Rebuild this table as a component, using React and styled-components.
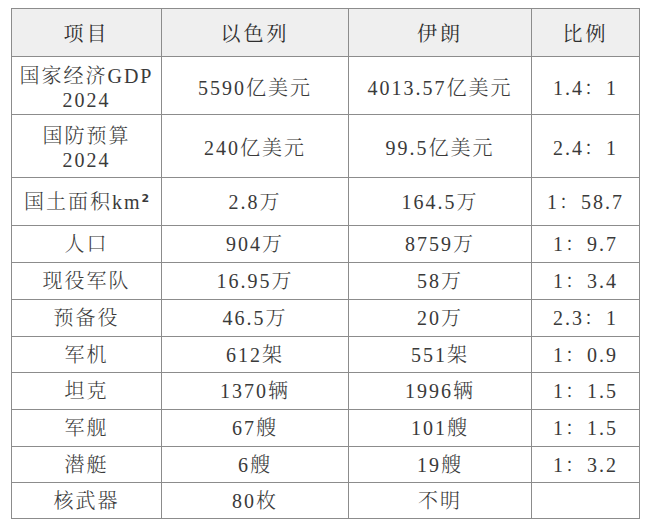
import React from "react";
import styled, { createGlobalStyle } from "styled-components";

const GlobalStyle = createGlobalStyle`
  html, body {
    margin: 0;
    padding: 0;
    background: #ffffff;
  }
  body {
    font-family: "Liberation Serif", "Noto Serif CJK SC", "Noto Sans CJK SC", serif;
    color: #3a3a3a;
  }
`;

const Page = styled.main`
  width: 650px;
  height: 531px;
  padding: 8px 0 0 11px;
  box-sizing: border-box;
  background: #ffffff;
`;

const Table = styled.table`
  width: 628px;
  border-collapse: collapse;
  table-layout: fixed;
  font-size: 20px;
  letter-spacing: 2px;
`;

const HeadCell = styled.th`
  height: 47px;
  padding: 0;
  border: 1px solid #8c8c8c;
  background: #efefef;
  font-weight: 400;
  color: #2e2e2e;
  letter-spacing: 3px;
  text-align: center;
  vertical-align: middle;
`;

const Cell = styled.td`
  height: ${(props) => (props.$tall ? props.$h - 4 : props.$h)}px;
  padding: ${(props) => (props.$tall ? "4px 0 0" : "0")};
  border: 1px solid #8c8c8c;
  text-align: center;
  vertical-align: middle;
  line-height: 24px;
  font-weight: 300;
  color: #3a3a3a;
  white-space: nowrap;
`;

const Sup = styled.sup`
  font-family: "DejaVu Sans", sans-serif;
  font-weight: 700;
  font-size: 11px;
  letter-spacing: 0;
  vertical-align: 7px;
  line-height: 0;
`;

const columns = [150, 187, 183, 108];

const rows = [
  { h: 57, item: ["国家经济GDP", "2024"], il: "5590亿美元", ir: "4013.57亿美元", ratio: "1.4：1" },
  { h: 62, item: ["国防预算", "2024"], il: "240亿美元", ir: "99.5亿美元", ratio: "2.4：1" },
  { h: 47, item: ["国土面积km", "sup"], il: "2.8万", ir: "164.5万", ratio: "1：58.7" },
  { h: 36, item: ["人口"], il: "904万", ir: "8759万", ratio: "1：9.7" },
  { h: 36, item: ["现役军队"], il: "16.95万", ir: "58万", ratio: "1：3.4" },
  { h: 36, item: ["预备役"], il: "46.5万", ir: "20万", ratio: "2.3：1" },
  { h: 35, item: ["军机"], il: "612架", ir: "551架", ratio: "1：0.9" },
  { h: 36, item: ["坦克"], il: "1370辆", ir: "1996辆", ratio: "1：1.5" },
  { h: 36, item: ["军舰"], il: "67艘", ir: "101艘", ratio: "1：1.5" },
  { h: 35, item: ["潜艇"], il: "6艘", ir: "19艘", ratio: "1：3.2" },
  { h: 35, item: ["核武器"], il: "80枚", ir: "不明", ratio: "" },
];

function ItemLabel({ item }) {
  if (item[1] === "sup") {
    return (
      <>
        {item[0]}
        <Sup>2</Sup>
      </>
    );
  }
  return item.map((line, i) => (
    <React.Fragment key={i}>
      {i > 0 && <br />}
      {line}
    </React.Fragment>
  ));
}

export default function App() {
  return (
    <>
      <GlobalStyle />
      <Page>
        <Table>
          <colgroup>
            {columns.map((w, i) => (
              <col key={i} style={{ width: w }} />
            ))}
          </colgroup>
          <thead>
            <tr>
              <HeadCell>项目</HeadCell>
              <HeadCell>以色列</HeadCell>
              <HeadCell>伊朗</HeadCell>
              <HeadCell>比例</HeadCell>
            </tr>
          </thead>
          <tbody>
            {rows.map((row, i) => {
              const tall = row.item.length > 1 && row.item[1] !== "sup";
              return (
                <tr key={i}>
                  <Cell $h={row.h} $tall={tall}>
                    <ItemLabel item={row.item} />
                  </Cell>
                  <Cell $h={row.h} $tall={tall}>{row.il}</Cell>
                  <Cell $h={row.h} $tall={tall}>{row.ir}</Cell>
                  <Cell $h={row.h} $tall={tall}>{row.ratio}</Cell>
                </tr>
              );
            })}
          </tbody>
        </Table>
      </Page>
    </>
  );
}
